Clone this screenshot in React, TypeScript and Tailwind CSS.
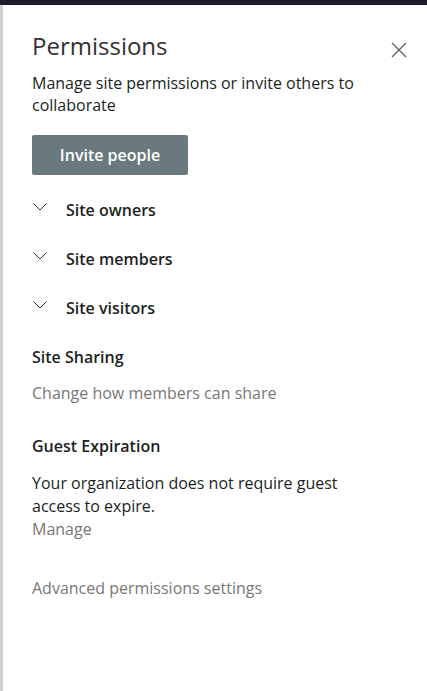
const groups = ["Site owners", "Site members", "Site visitors"];

function Chevron() {
  return (
    <svg width="14" height="8" viewBox="0 0 14 8" className="ml-[1px] mt-[-6px] text-[#323130]">
      <path d="M0.5 0.5 L7 7 L13.5 0.5" fill="none" stroke="currentColor" strokeWidth="1" />
    </svg>
  );
}

export default function App() {
  return (
    <div
      className="flex h-[691px] w-[427px] flex-col bg-white text-[#201f1e]"
      style={{ fontFamily: '"Open Sans", "Noto Sans", sans-serif' }}
    >
      <div className="h-[5px] w-full bg-[#1e1c2c]" />
      <div className="flex flex-1 border-l-[3px] border-[#d2d2d2]">
        <div className="flex flex-1 flex-col pl-[29px] pr-5">
          {/* header */}
          <div className="mt-[25px] flex items-start justify-between">
            <h1 className="text-[24px] leading-[32px] text-[#323130]">Permissions</h1>
            <button className="mr-[0px] mt-[12px]">
              <svg width="16" height="16" viewBox="0 0 16 16" className="text-[#605e5c]">
                <path d="M1 1 L15 15 M15 1 L1 15" stroke="currentColor" strokeWidth="1.3" />
              </svg>
            </button>
          </div>
          <p className="mt-[10px] text-[16px] leading-[22px]">
            Manage site permissions or invite others to collaborate
          </p>

          <button className="mt-[19px] h-[40px] w-[156px] rounded-[2px] bg-[#69797e] text-[16px] font-semibold text-white">
            Invite people
          </button>

          {/* groups */}
          <div className="mt-[10px] flex flex-col">
            {groups.map((g) => (
              <div key={g} className="flex h-[49px] items-center">
                <Chevron />
                <span className="ml-[19px] text-[16px] font-semibold">{g}</span>
              </div>
            ))}
          </div>

          <div className="mt-[14px] text-[16px] font-semibold leading-[22px]">Site Sharing</div>
          <div className="mt-[14px] text-[16px] leading-[22px] text-[#797775]">
            Change how members can share
          </div>

          <div className="mt-[31px] text-[16px] font-semibold leading-[22px]">Guest Expiration</div>
          <p className="mt-[15px] max-w-[340px] text-[16px] leading-[23px]">
            Your organization does not require guest access to expire.
          </p>
          <div className="text-[16px] leading-[23px] text-[#797775]">Manage</div>

          <div className="mt-[36px] text-[16px] leading-[22px] text-[#797775]">
            Advanced permissions settings
          </div>
        </div>
      </div>
    </div>
  );
}
